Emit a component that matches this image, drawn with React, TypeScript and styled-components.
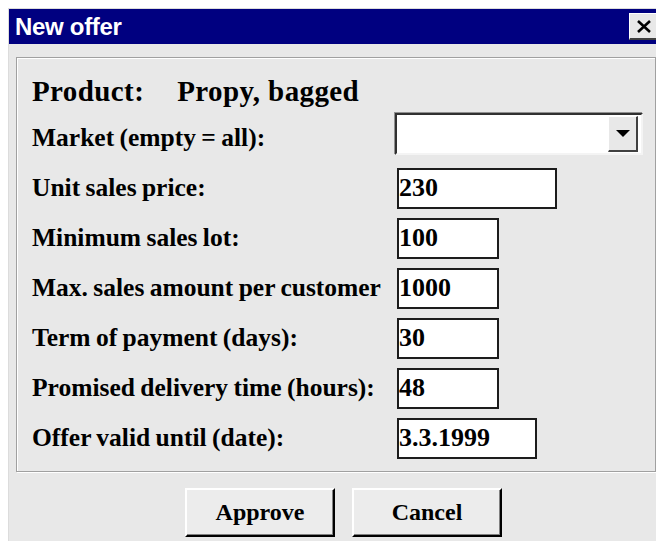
import styled, { createGlobalStyle } from 'styled-components';

const GlobalStyle = createGlobalStyle`
  html, body {
    margin: 0;
    padding: 0;
    background: #ffffff;
    overflow: hidden;
  }
  body {
    padding: 8px 0 0 8px;
  }
`;

interface Field {
  label: string;
  value: string;
  width: number;
}

const fields: Field[] = [
  { label: 'Unit sales price:', value: '230', width: 160 },
  { label: 'Minimum sales lot:', value: '100', width: 102 },
  { label: 'Max. sales amount per customer', value: '1000', width: 102 },
  { label: 'Term of payment (days):', value: '30', width: 102 },
  { label: 'Promised delivery time (hours):', value: '48', width: 102 },
  { label: 'Offer valid until (date):', value: '3.3.1999', width: 140 },
];

const App = () => {
  return (
    <>
      <GlobalStyle />
      <Window>
        <TitleBar>
          <Title>New offer</Title>
          <CloseButton>
            <svg width='16' height='13' viewBox='0 0 16 13'>
              <path d='M2 1 L14 12 M14 1 L2 12' stroke='#000' strokeWidth='2.6' />
            </svg>
          </CloseButton>
        </TitleBar>
        <Body>
          <GroupBox>
            <ProductLine>
              <span>Product:</span>
              <span>Propy, bagged</span>
            </ProductLine>
            <FormGrid>
              <Label>Market (empty = all):</Label>
              <ComboBox>
                <DropButton>
                  <svg width='14' height='7' viewBox='0 0 14 7'>
                    <path d='M0 0 H14 L7 7 Z' fill='#000' />
                  </svg>
                </DropButton>
              </ComboBox>
              {fields.map((field) => (
                <Row key={field.label}>
                  <Label>{field.label}</Label>
                  <TextBox $width={field.width}>{field.value}</TextBox>
                </Row>
              ))}
            </FormGrid>
          </GroupBox>
          <ButtonRow>
            <Button>Approve</Button>
            <Button>Cancel</Button>
          </ButtonRow>
        </Body>
      </Window>
    </>
  );
};

export default App;

const Window = styled.div`
  width: 652px;
  border: 1px solid #dcdcdc;
  background: #e8e8e8;
`;

const TitleBar = styled.div`
  height: 35px;
  display: flex;
  align-items: center;
  justify-content: space-between;
  padding: 0 2px 0 6px;
  background: #000080;
`;

const Title = styled.div`
  font-family: 'Liberation Sans', Arial, sans-serif;
  font-weight: bold;
  font-size: 24px;
  letter-spacing: -0.3px;
  color: #ffffff;
`;

const CloseButton = styled.div`
  width: 30px;
  height: 27px;
  box-sizing: border-box;
  display: flex;
  align-items: center;
  justify-content: center;
  background: #e8e8e8;
  border-top: 1px solid #ffffff;
  border-left: 1px solid #ffffff;
  border-right: 2px solid #404040;
  border-bottom: 2px solid #404040;
`;

const Body = styled.div`
  padding: 13px 5px 4px 7px;
`;

const GroupBox = styled.div`
  border: 1px solid #a0a0a0;
  box-shadow: inset 1px 1px 0 #ffffff, 1px 1px 0 #ffffff;
  padding: 14px 0 8px 15px;
`;

const ProductLine = styled.div`
  display: flex;
  gap: 33px;
  height: 41px;
  line-height: 39px;
  font-family: 'Liberation Serif', 'Times New Roman', serif;
  font-weight: bold;
  font-size: 29px;
  letter-spacing: 0.4px;
  color: #000000;
`;

const FormGrid = styled.div`
  display: grid;
  grid-template-columns: 365px 1fr;
  grid-auto-rows: 50px;
  align-items: center;
`;

const Row = styled.div`
  display: contents;
`;

const Label = styled.div`
  font-family: 'Liberation Serif', 'Times New Roman', serif;
  font-weight: bold;
  font-size: 25.5px;
  word-spacing: -1px;
  color: #000000;
  white-space: nowrap;
`;

const ComboBox = styled.div`
  align-self: start;
  margin: 0 0 0 -2px;
  width: 248px;
  height: 42px;
  box-sizing: border-box;
  display: flex;
  justify-content: flex-end;
  align-items: center;
  padding-right: 3px;
  background: #ffffff;
  border-top: 2px solid #303030;
  border-left: 2px solid #303030;
  border-right: 2px solid #f4f4f4;
  border-bottom: 2px solid #f4f4f4;
  box-shadow: -1px -1px 0 #909090;
`;

const DropButton = styled.div`
  width: 30px;
  height: 36px;
  box-sizing: border-box;
  display: flex;
  align-items: center;
  justify-content: center;
  background: #e8e8e8;
  border-top: 1px solid #ffffff;
  border-left: 1px solid #ffffff;
  border-right: 2px solid #404040;
  border-bottom: 2px solid #404040;
`;

const TextBox = styled.div<{ $width: number }>`
  width: ${(p) => p.$width}px;
  height: 41px;
  box-sizing: border-box;
  border: 2px solid #1c1c1c;
  background: #ffffff;
  display: flex;
  align-items: center;
  font-family: 'Liberation Serif', 'Times New Roman', serif;
  font-weight: bold;
  font-size: 26px;
  color: #000000;
`;

const ButtonRow = styled.div`
  display: flex;
  gap: 17px;
  padding: 16px 0 0 169px;
`;

const Button = styled.div`
  width: 150px;
  height: 49px;
  box-sizing: border-box;
  display: flex;
  align-items: center;
  justify-content: center;
  background: #ececec;
  border-top: 2px solid #ffffff;
  border-left: 2px solid #ffffff;
  border-right: 2px solid #000000;
  border-bottom: 2px solid #000000;
  box-shadow: inset -1px -1px 0 #808080;
  font-family: 'Liberation Serif', 'Times New Roman', serif;
  font-weight: bold;
  font-size: 24px;
  color: #000000;
`;
